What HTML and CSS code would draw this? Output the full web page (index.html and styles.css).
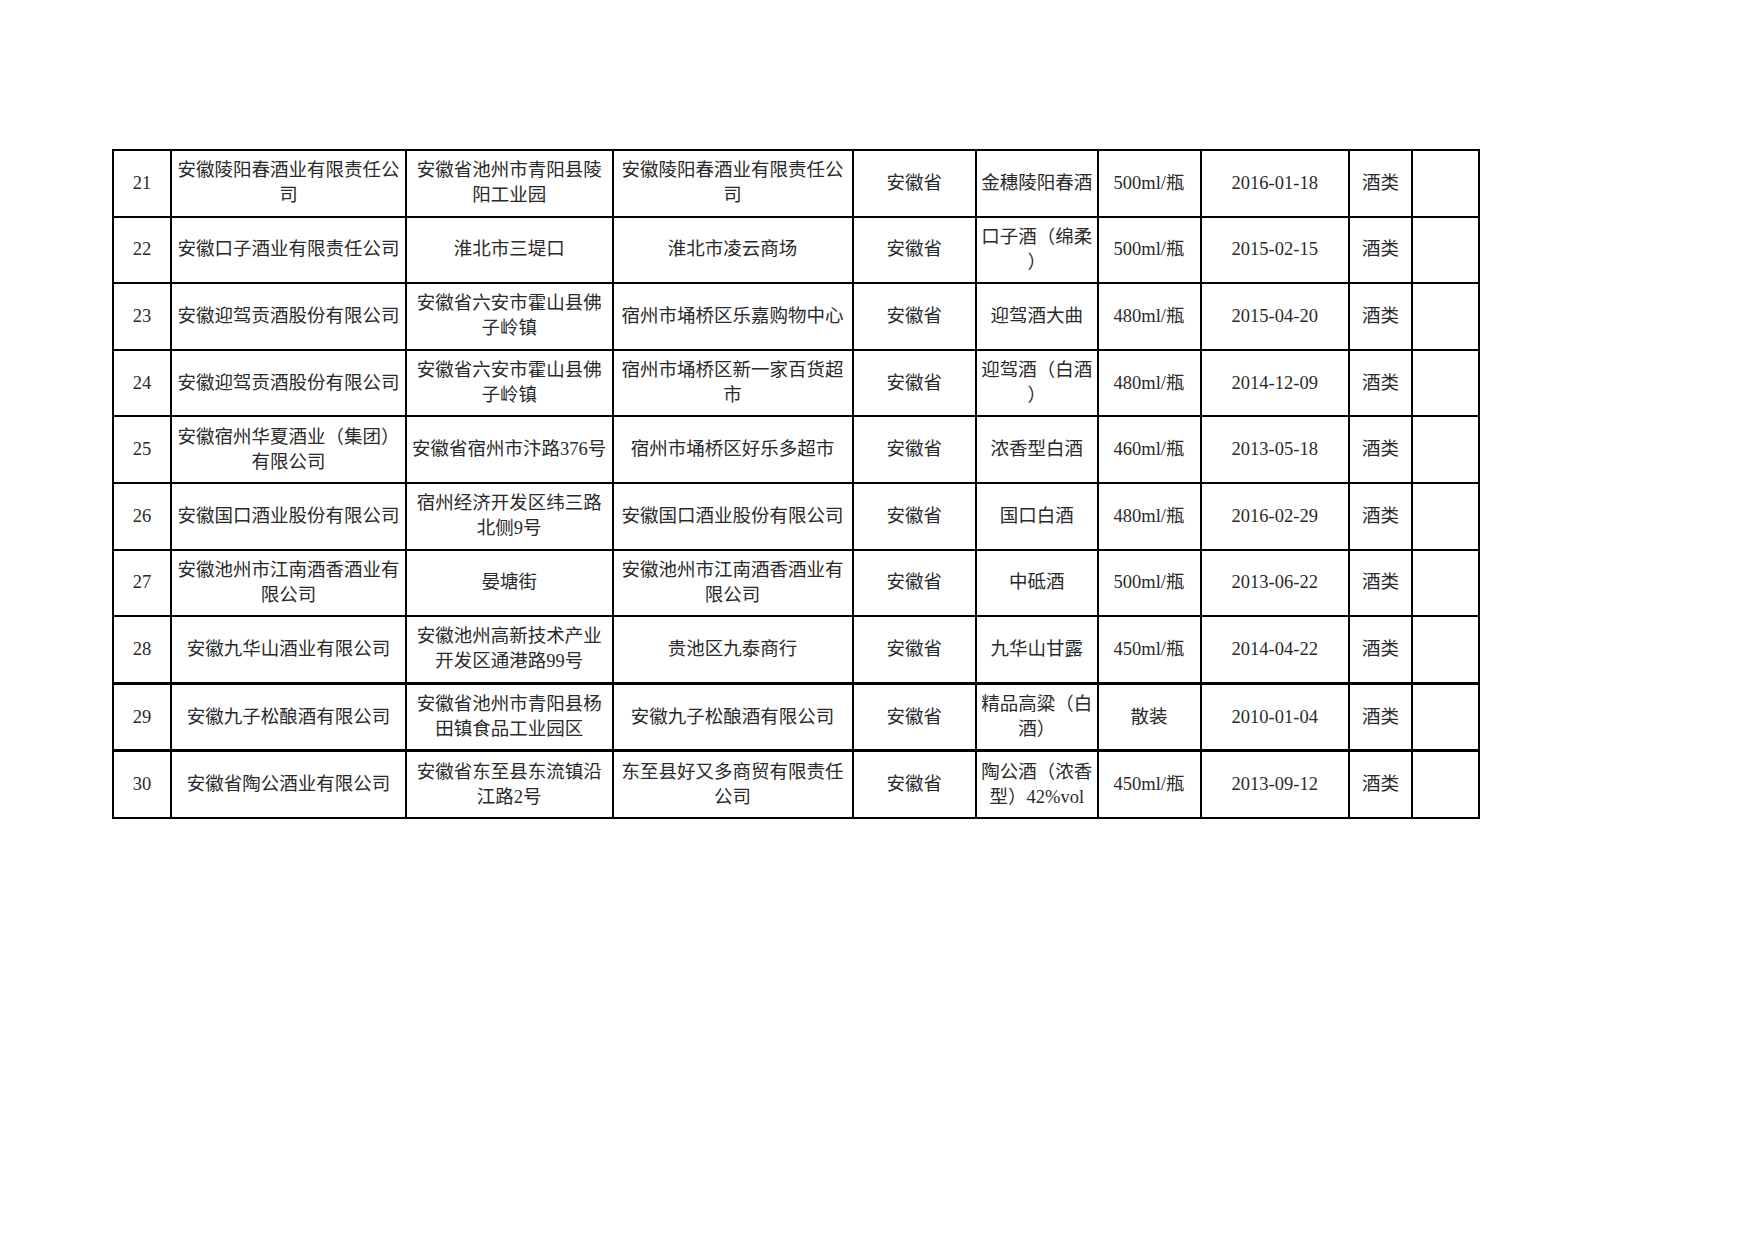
FILE: index.html
```html
<!DOCTYPE html>
<html lang="zh-CN">
<head>
<meta charset="utf-8">
<title>抽检信息</title>
<link rel="stylesheet" href="styles.css">
</head>
<body>
<div class="page">
<table class="sheet">
<colgroup>
<col class="c1"><col class="c2"><col class="c3"><col class="c4"><col class="c5"><col class="c6"><col class="c7"><col class="c8"><col class="c9"><col class="c10">
</colgroup>
<tbody>
<tr><td>21</td><td>安徽陵阳春酒业有限责任公<br>司</td><td>安徽省池州市青阳县陵<br>阳工业园</td><td>安徽陵阳春酒业有限责任公<br>司</td><td>安徽省</td><td>金穗陵阳春酒</td><td>500ml/瓶</td><td>2016-01-18</td><td>酒类</td><td></td></tr>
<tr><td>22</td><td>安徽口子酒业有限责任公司</td><td>淮北市三堤口</td><td>淮北市凌云商场</td><td>安徽省</td><td>口子酒（绵柔<br>）</td><td>500ml/瓶</td><td>2015-02-15</td><td>酒类</td><td></td></tr>
<tr><td>23</td><td>安徽迎驾贡酒股份有限公司</td><td>安徽省六安市霍山县佛<br>子岭镇</td><td>宿州市埇桥区乐嘉购物中心</td><td>安徽省</td><td>迎驾酒大曲</td><td>480ml/瓶</td><td>2015-04-20</td><td>酒类</td><td></td></tr>
<tr><td>24</td><td>安徽迎驾贡酒股份有限公司</td><td>安徽省六安市霍山县佛<br>子岭镇</td><td>宿州市埇桥区新一家百货超<br>市</td><td>安徽省</td><td>迎驾酒（白酒<br>）</td><td>480ml/瓶</td><td>2014-12-09</td><td>酒类</td><td></td></tr>
<tr><td>25</td><td>安徽宿州华夏酒业（集团）<br>有限公司</td><td>安徽省宿州市汴路376号</td><td>宿州市埇桥区好乐多超市</td><td>安徽省</td><td>浓香型白酒</td><td>460ml/瓶</td><td>2013-05-18</td><td>酒类</td><td></td></tr>
<tr><td>26</td><td>安徽国口酒业股份有限公司</td><td>宿州经济开发区纬三路<br>北侧9号</td><td>安徽国口酒业股份有限公司</td><td>安徽省</td><td>国口白酒</td><td>480ml/瓶</td><td>2016-02-29</td><td>酒类</td><td></td></tr>
<tr><td>27</td><td>安徽池州市江南酒香酒业有<br>限公司</td><td>晏塘街</td><td>安徽池州市江南酒香酒业有<br>限公司</td><td>安徽省</td><td>中砥酒</td><td>500ml/瓶</td><td>2013-06-22</td><td>酒类</td><td></td></tr>
<tr><td>28</td><td>安徽九华山酒业有限公司</td><td>安徽池州高新技术产业<br>开发区通港路99号</td><td>贵池区九泰商行</td><td>安徽省</td><td>九华山甘露</td><td>450ml/瓶</td><td>2014-04-22</td><td>酒类</td><td></td></tr>
<tr class="thick"><td>29</td><td>安徽九子松酿酒有限公司</td><td>安徽省池州市青阳县杨<br>田镇食品工业园区</td><td>安徽九子松酿酒有限公司</td><td>安徽省</td><td>精品高粱（白<br>酒）</td><td>散装</td><td>2010-01-04</td><td>酒类</td><td></td></tr>
<tr class="thick"><td>30</td><td>安徽省陶公酒业有限公司</td><td>安徽省东至县东流镇沿<br>江路2号</td><td>东至县好又多商贸有限责任<br>公司</td><td>安徽省</td><td>陶公酒（浓香<br>型）42%vol</td><td>450ml/瓶</td><td>2013-09-12</td><td>酒类</td><td></td></tr>
</tbody>
</table>
</div>
</body>
</html>
```

FILE: styles.css
```css
html, body {
  margin: 0;
  padding: 0;
  background: #ffffff;
}

.page {
  padding: 149px 0 0 112px;
}

.sheet {
  border-collapse: collapse;
  table-layout: fixed;
  width: 1368px;
  font-family: "Liberation Serif", "Noto Sans CJK SC", serif;
  font-size: 18.5px;
  line-height: 25px;
  color: #2a2a2a;
  border: 2px solid #000;
}

.sheet td {
  border: 2px solid #000;
  height: 64.6px;
  padding: 0;
  text-align: center;
  vertical-align: middle;
  white-space: nowrap;
  overflow: hidden;
}

.sheet tr.thick td {
  border-top-width: 3px;
}

.c1 { width: 58px; }
.c2 { width: 235px; }
.c3 { width: 206.5px; }
.c4 { width: 240px; }
.c5 { width: 123.5px; }
.c6 { width: 121.5px; }
.c7 { width: 103px; }
.c8 { width: 148.5px; }
.c9 { width: 63px; }
.c10 { width: 67px; }
```
